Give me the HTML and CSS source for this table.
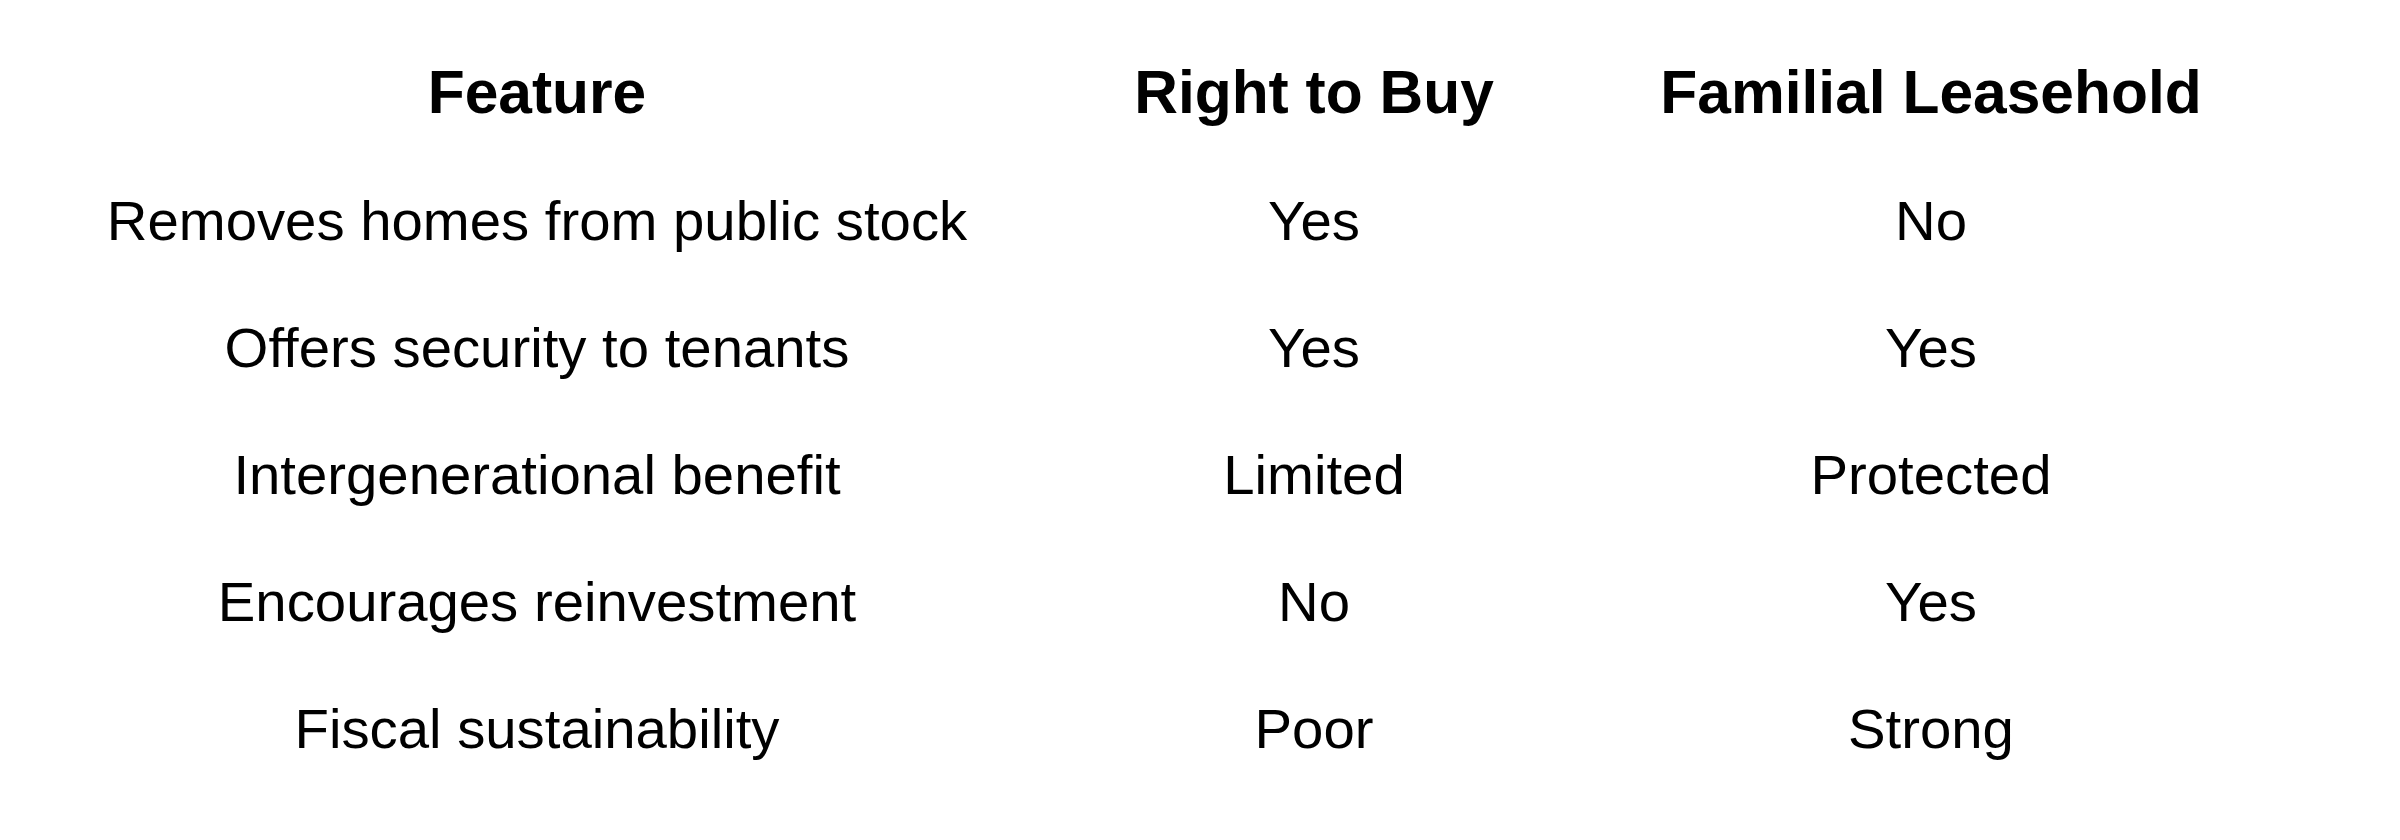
FILE: index.html
```html
<!DOCTYPE html>
<html lang="en">
<head>
<meta charset="utf-8">
<title>Right to Buy vs Familial Leasehold</title>
<link rel="stylesheet" href="styles.css">
</head>
<body>
<div class="table">
  <div class="cell head">Feature</div>
  <div class="cell head">Right to Buy</div>
  <div class="cell head">Familial Leasehold</div>

  <div class="cell">Removes homes from public stock</div>
  <div class="cell">Yes</div>
  <div class="cell">No</div>

  <div class="cell">Offers security to tenants</div>
  <div class="cell">Yes</div>
  <div class="cell">Yes</div>

  <div class="cell">Intergenerational benefit</div>
  <div class="cell">Limited</div>
  <div class="cell">Protected</div>

  <div class="cell">Encourages reinvestment</div>
  <div class="cell">No</div>
  <div class="cell">Yes</div>

  <div class="cell">Fiscal sustainability</div>
  <div class="cell">Poor</div>
  <div class="cell">Strong</div>
</div>
</body>
</html>
```

FILE: styles.css
```css
html, body {
  margin: 0;
  padding: 0;
  background: #ffffff;
}

body {
  width: 2400px;
  height: 840px;
  overflow: hidden;
  font-family: "Liberation Sans", Arial, Helvetica, sans-serif;
  color: #000000;
}

.table {
  display: grid;
  grid-template-columns: 1028px 526px 708px;
  grid-template-rows: 132px repeat(5, 127px);
  margin: 26px 0 0 23px;
}

.cell {
  display: flex;
  align-items: center;
  justify-content: center;
  font-size: 56.3px;
  line-height: 1;
  white-space: nowrap;
}

.head {
  font-weight: 700;
  font-size: 60.5px;
}
```
